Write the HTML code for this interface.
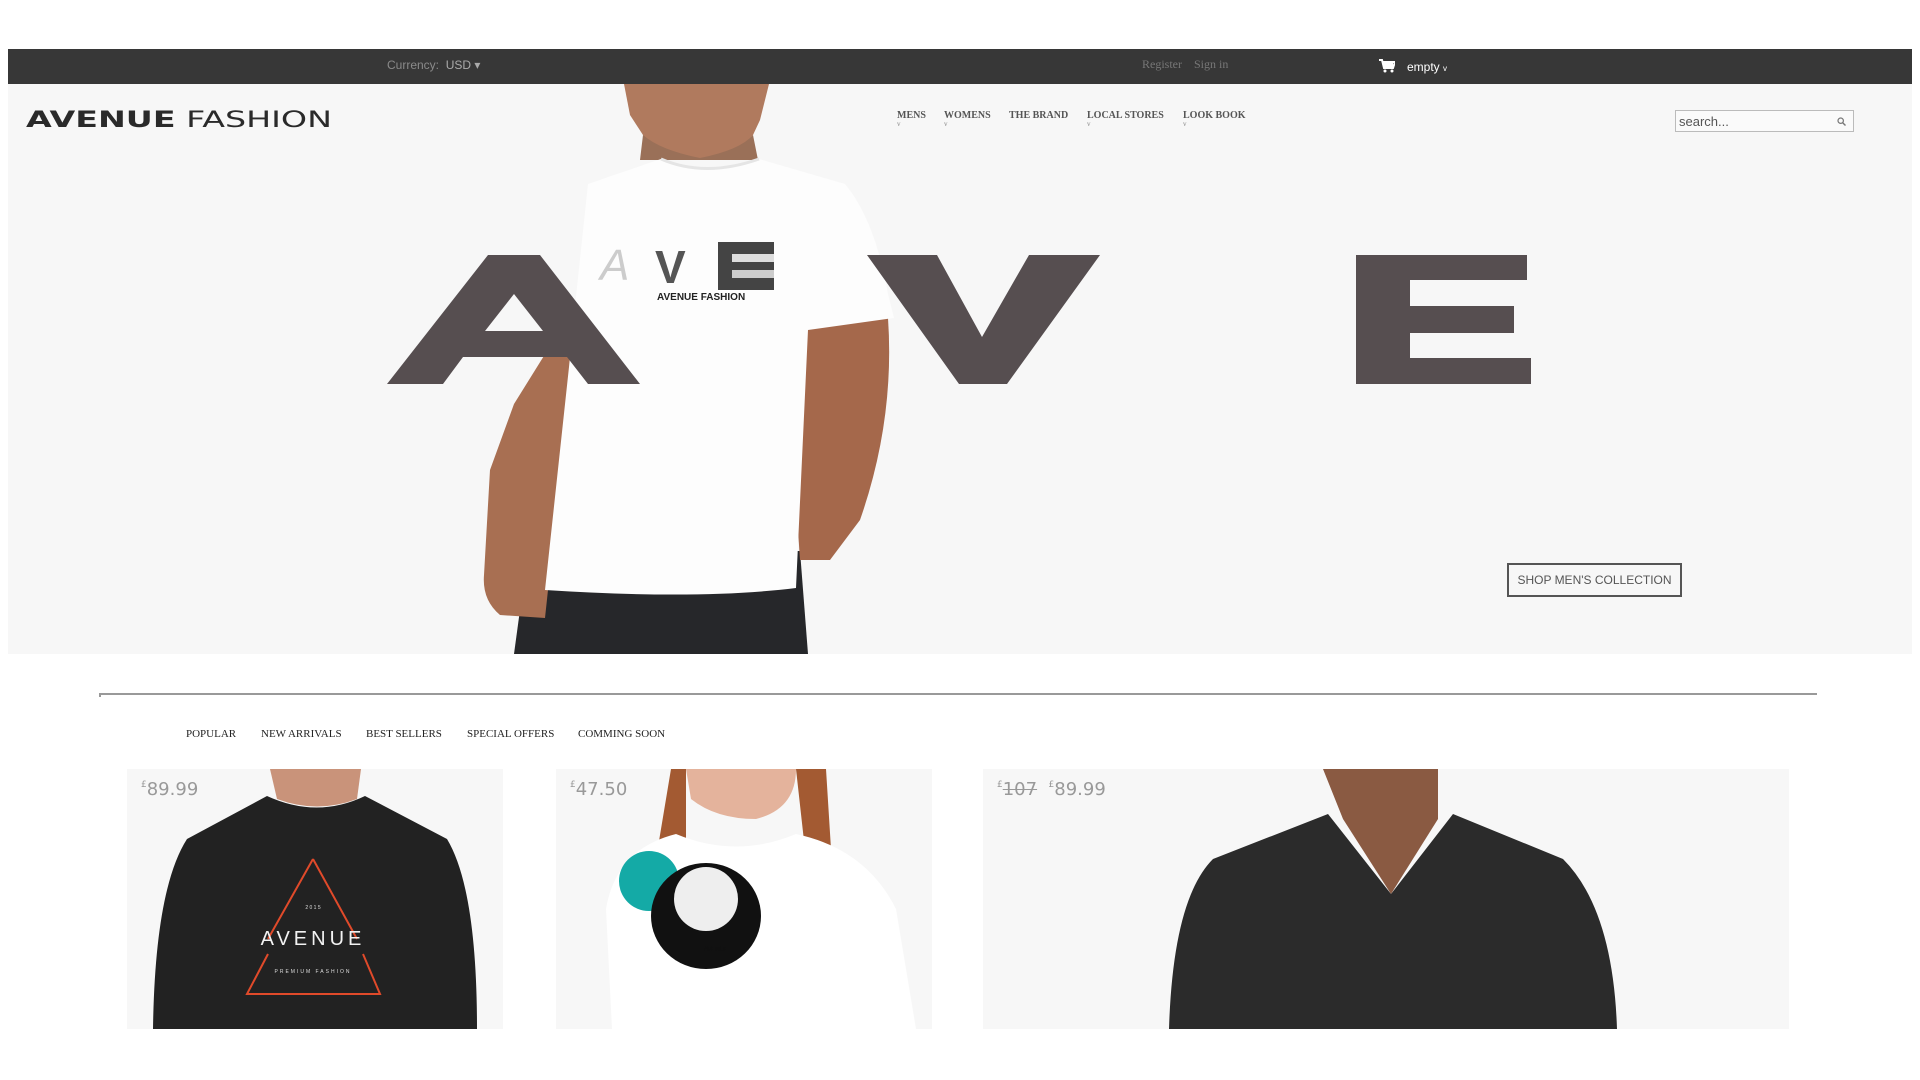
<!DOCTYPE html>
<html><head><meta charset="utf-8"><style>
*{margin:0;padding:0;box-sizing:border-box}
body{width:1920px;height:1080px;background:#fff;position:relative;overflow:hidden;font-family:"Liberation Serif",serif}
.a{position:absolute;white-space:nowrap}
.top{left:8px;top:49px;width:1904px;height:35px;background:#373737}
.hero{left:8px;top:84px;width:1904px;height:570px;background:#f7f7f7;overflow:hidden}
.nav{font-size:10px;font-weight:bold;color:#555;top:110px}
.nav i{display:block;font-style:normal;font-weight:normal;font-size:7px;color:#888;line-height:7px}
.tab{top:728px;font-size:11px;color:#222}
.card{background:#f7f7f7;top:769px;height:260px;overflow:hidden}
.price{font-family:"DejaVu Sans",sans-serif;font-size:18px;color:#999;top:10px;left:14px}
.price sup{font-size:9px;vertical-align:8px}
</style></head><body>
<div class="a top"></div>
<div class="a" style="left:387px;top:58px;font-size:12px;color:#8a8a8a;font-family:'Liberation Sans Narrow','Liberation Sans',sans-serif">Currency:&nbsp; <span style="color:#aaa">USD ▾</span></div>
<div class="a" style="left:1142px;top:57px;font-size:12px;color:#777">Register&nbsp;&nbsp;&nbsp; Sign in</div>
<svg class="a" style="left:1379px;top:59px" width="16" height="14" viewBox="0 0 16 14"><path d="M0 1h3l2 8h9l2-6H4" fill="none" stroke="#fff" stroke-width="2"/><rect x="4" y="3" width="10" height="5" fill="#fff"/><circle cx="6" cy="12" r="1.5" fill="#fff"/><circle cx="13" cy="12" r="1.5" fill="#fff"/></svg>
<div class="a" style="left:1407px;top:60px;font-size:12px;color:#fff;font-family:'Liberation Sans',sans-serif">empty <span style="font-size:8px">v</span></div>

<div class="a hero">
<svg width="1904" height="570" viewBox="8 84 1904 570" style="position:absolute;left:0;top:0">
 <!-- pants -->
 <path d="M514 654 L528 551 L800 551 L808 654 Z" fill="#26272a"/>
 <!-- arms -->
 <path d="M575 306 L600 320 L560 500 L548 590 L545 618 L500 615 Q482 600 484 575 L490 470 L514 404 Z" fill="#a86f52"/>
 <path d="M808 318 L888 318 Q895 420 860 520 L830 560 L800 560 L796 500 Z" fill="#a5684b"/>
 <!-- head -->
 <path d="M624 84 L769 84 L760 120 L753 135 Q740 150 735 153 L700 160 L667 153 Q650 145 643 135 L630 115 Z" fill="#b07a5e"/>
 <path d="M643 135 Q660 150 700 158 Q740 150 753 135 L758 160 L640 160 Z" fill="#9a7058"/>
 <!-- shirt -->
 <path d="M661 159 Q705 175 759 159 L845 184 Q875 220 888 294 L894 318 L808 330 L796 588 Q700 600 545 590 L569 367 L575 306 L588 184 Z" fill="#fdfdfd"/>
 <path d="M661 159 Q705 178 759 159" fill="none" stroke="#e5e5e5" stroke-width="3"/>
 <text x="600" y="280" font-family="Liberation Sans,sans-serif" font-size="44" fill="#ccc" font-style="italic">A</text>
 <text x="655" y="283" font-family="Liberation Sans,sans-serif" font-size="46" fill="#555" font-weight="bold">V</text>
 <rect x="718" y="242" width="56" height="48" fill="#444"/><rect x="732" y="254" width="42" height="8" fill="#ddd"/><rect x="732" y="270" width="42" height="8" fill="#ccc"/>
 <text x="657" y="300" font-family="Liberation Sans,sans-serif" font-size="10" fill="#222" font-weight="bold">AVENUE FASHION</text>
 <!-- letters -->
 <path fill-rule="evenodd" fill="#564e50" d="M387 384 L488 255 L540 255 L640 384 L588 384 L567 357 L463 357 L443 384 Z M485 331 L514 294 L543 331 Z"/>
 <path fill="#564e50" d="M867 255 L937 255 L982 337 L1029 255 L1100 255 L1007 384 L959 384 Z"/>
 <path fill="#564e50" d="M1356 255 L1527 255 L1527 280 L1410 280 L1410 306 L1514 306 L1514 333 L1410 333 L1410 358 L1531 358 L1531 384 L1356 384 Z"/>
</svg>
</div>
<svg class="a" style="left:26px;top:108px" width="306" height="22"><text x="0" y="19" font-family="DejaVu Sans,sans-serif" font-size="22" fill="#2a2a2a" textLength="306" lengthAdjust="spacingAndGlyphs"><tspan font-weight="bold">AVENUE</tspan> FASHION</text></svg>
<div class="a nav" style="left:897px">MENS<i>v</i></div>
<div class="a nav" style="left:944px">WOMENS<i>v</i></div>
<div class="a nav" style="left:1009px">THE BRAND</div>
<div class="a nav" style="left:1087px">LOCAL STORES<i>v</i></div>
<div class="a nav" style="left:1183px">LOOK BOOK<i>v</i></div>
<div class="a" style="left:1675px;top:110px;width:179px;height:22px;border:1px solid #bbb;background:#fafafa;font-family:'Liberation Sans',sans-serif;font-size:13px;color:#555;padding:3px 3px">search...
<svg style="position:absolute;right:7px;top:6px" width="9" height="9" viewBox="0 0 9 9"><circle cx="3.7" cy="3.7" r="2.7" fill="none" stroke="#777" stroke-width="1.2"/><path d="M5.7 5.7L8.5 8.5" stroke="#777" stroke-width="1.4"/></svg></div>
<div class="a" style="left:1507px;top:563px;width:175px;height:34px;border:2px solid #555;font-family:'Liberation Sans',sans-serif;font-size:12px;color:#555;text-align:center;line-height:30px">SHOP MEN'S COLLECTION</div>

<div class="a" style="left:99px;top:693px;width:1718px;height:2px;background:#999"></div>
<div class="a" style="left:99px;top:693px;width:2px;height:4px;background:#999"></div>
<div class="a tab" style="left:186px">POPULAR</div>
<div class="a tab" style="left:261px">NEW ARRIVALS</div>
<div class="a tab" style="left:366px">BEST SELLERS</div>
<div class="a tab" style="left:467px">SPECIAL OFFERS</div>
<div class="a tab" style="left:578px">COMMING SOON</div>

<div class="a card" style="left:127px;width:376px">
<svg width="376" height="260" style="position:absolute;left:0;top:0">
 <path d="M143 0 L234 0 L230 30 Q190 45 150 30 Z" fill="#c9937a"/>
 <path d="M26 260 Q28 120 60 70 L140 27 Q190 50 238 27 L320 70 Q350 120 350 260 Z" fill="#222"/>
 <path d="M186 90 L141 170 M186 90 L230 170 M141 185 L120 225 L253 225 L236 185" fill="none" stroke="#e04a2a" stroke-width="2"/>
 <text x="186" y="140" font-family="Liberation Sans,sans-serif" font-size="5" fill="#ddd" text-anchor="middle">2 0 1 5</text>
 <text x="186" y="176" font-family="Liberation Sans,sans-serif" font-size="20" fill="#f2f2f2" text-anchor="middle" letter-spacing="4">AVENUE</text>
 <text x="186" y="204" font-family="Liberation Sans,sans-serif" font-size="5" fill="#ddd" text-anchor="middle" letter-spacing="2">PREMIUM FASHION</text>
</svg>
<div class="a price"><sup>£</sup>89.99</div></div>

<div class="a card" style="left:556px;width:376px">
<svg width="376" height="260" style="position:absolute;left:0;top:0">
 <path d="M115 0 L130 0 Q130 60 130 80 L100 90 Z M270 0 L240 0 L250 90 L275 80 Z" fill="#a35a32"/>
 <path d="M130 0 L240 0 Q240 40 200 50 Q160 50 135 30 Z" fill="#e4b39c"/>
 <path d="M56 260 L50 140 Q60 80 120 65 Q180 90 240 65 Q310 80 340 140 L360 260 Z" fill="#fff"/>
 <circle cx="93" cy="112" r="30" fill="#14aaa6"/>
 <ellipse cx="150" cy="147" rx="55" ry="53" fill="#111"/>
 <ellipse cx="150" cy="130" rx="32" ry="32" fill="#eee"/>
 <text x="160" y="182" font-family="Liberation Sans,sans-serif" font-size="6" fill="#111" text-anchor="middle">AVENUE</text>
</svg>
<div class="a price"><sup>£</sup>47.50</div></div>

<div class="a card" style="left:983px;width:806px">
<svg width="806" height="260" style="position:absolute;left:0;top:0">
 <path d="M340 0 L455 0 L455 50 L408 125 L360 50 Z" fill="#8a5a42"/>
 <path d="M186 260 Q190 130 230 90 L345 45 L408 125 L470 45 L580 90 Q630 140 634 260 Z" fill="#2b2b2b"/>
</svg>
<div class="a price"><sup>£</sup><s>107</s>&nbsp; <sup>£</sup>89.99</div></div>
</body></html>
